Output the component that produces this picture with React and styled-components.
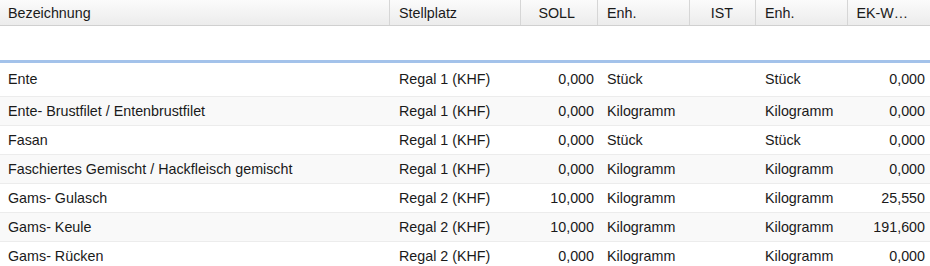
import React from 'react';
import styled, { createGlobalStyle } from 'styled-components';

const GlobalStyle = createGlobalStyle`
    body {
        margin: 0;
        background: #ffffff;
        font-family: "Liberation Sans", Arial, sans-serif;
    }
`;

const columns = [
    { key: 'name', title: 'Bezeichnung', width: 390 },
    { key: 'place', title: 'Stellplatz', width: 131 },
    { key: 'soll', title: 'SOLL', width: 77, align: 'right' },
    { key: 'unit1', title: 'Enh.', width: 92 },
    { key: 'ist', title: 'IST', width: 66, align: 'right' },
    { key: 'unit2', title: 'Enh.', width: 92 },
    { key: 'ek', title: 'EK-W…', width: 82, align: 'right' },
];

const rows = [
    { name: 'Ente', place: 'Regal 1 (KHF)', soll: '0,000', unit1: 'Stück', ist: '', unit2: 'Stück', ek: '0,000' },
    { name: 'Ente- Brustfilet / Entenbrustfilet', place: 'Regal 1 (KHF)', soll: '0,000', unit1: 'Kilogramm', ist: '', unit2: 'Kilogramm', ek: '0,000' },
    { name: 'Fasan', place: 'Regal 1 (KHF)', soll: '0,000', unit1: 'Stück', ist: '', unit2: 'Stück', ek: '0,000' },
    { name: 'Faschiertes Gemischt / Hackfleisch gemischt', place: 'Regal 1 (KHF)', soll: '0,000', unit1: 'Kilogramm', ist: '', unit2: 'Kilogramm', ek: '0,000' },
    { name: 'Gams- Gulasch', place: 'Regal 2 (KHF)', soll: '10,000', unit1: 'Kilogramm', ist: '', unit2: 'Kilogramm', ek: '25,550' },
    { name: 'Gams- Keule', place: 'Regal 2 (KHF)', soll: '10,000', unit1: 'Kilogramm', ist: '', unit2: 'Kilogramm', ek: '191,600' },
    { name: 'Gams- Rücken', place: 'Regal 2 (KHF)', soll: '0,000', unit1: 'Kilogramm', ist: '', unit2: 'Kilogramm', ek: '0,000' },
];

const template = columns.map(c => c.width + 'px').join(' ');

const Grid = styled.div`
    width: 930px;
    font-size: 14.3px;
    color: #1a1a1a;
`;

const HeaderRow = styled.div`
    display: grid;
    grid-template-columns: ${template};
    height: 25px;
    background: linear-gradient(#fbfbfb, #ececec);
    border-bottom: 1px solid #d0d0d0;
`;

const HeaderCell = styled.div`
    display: flex;
    align-items: center;
    justify-content: ${p => (p.$align === 'right' ? 'flex-end' : 'flex-start')};
    padding: ${p => (p.$align === 'right' ? '0 22px 0 8px' : '0 8px 0 9px')};
    border-right: 1px solid #d6d6d6;
    white-space: nowrap;
    overflow: hidden;
    &:first-child {
        padding-left: 8px;
    }
    &:last-child {
        border-right: none;
    }
`;

const Spacer = styled.div`
    height: 34px;
    border-bottom: 3px solid #a3c2ea;
`;

const Row = styled.div`
    display: grid;
    grid-template-columns: ${template};
    height: 28px;
    padding: ${p => (p.$first ? '2px 0 3px' : '0')};
    background: ${p => (p.$alt ? '#f9f9f9' : '#ffffff')};
    border-bottom: 1px solid #ececec;
`;

const Cell = styled.div`
    display: flex;
    align-items: center;
    justify-content: ${p => (p.$align === 'right' ? 'flex-end' : 'flex-start')};
    padding: ${p => (p.$align === 'right' ? '0 4px 0 6px' : '0 6px 0 9px')};
    white-space: nowrap;
    overflow: hidden;
    &:first-child {
        padding-left: 8px;
    }
    &:last-child {
        padding-right: 5px;
    }
`;

export default function App() {
    return (
        <>
            <GlobalStyle />
            <Grid>
                <HeaderRow>
                    {columns.map(col => (
                        <HeaderCell key={col.key} $align={col.align}>{col.title}</HeaderCell>
                    ))}
                </HeaderRow>
                <Spacer />
                {rows.map((row, i) => (
                    <Row key={i} $first={i === 0} $alt={i % 2 === 1}>
                        {columns.map(col => (
                            <Cell key={col.key} $align={col.align}>{row[col.key]}</Cell>
                        ))}
                    </Row>
                ))}
            </Grid>
        </>
    );
}
